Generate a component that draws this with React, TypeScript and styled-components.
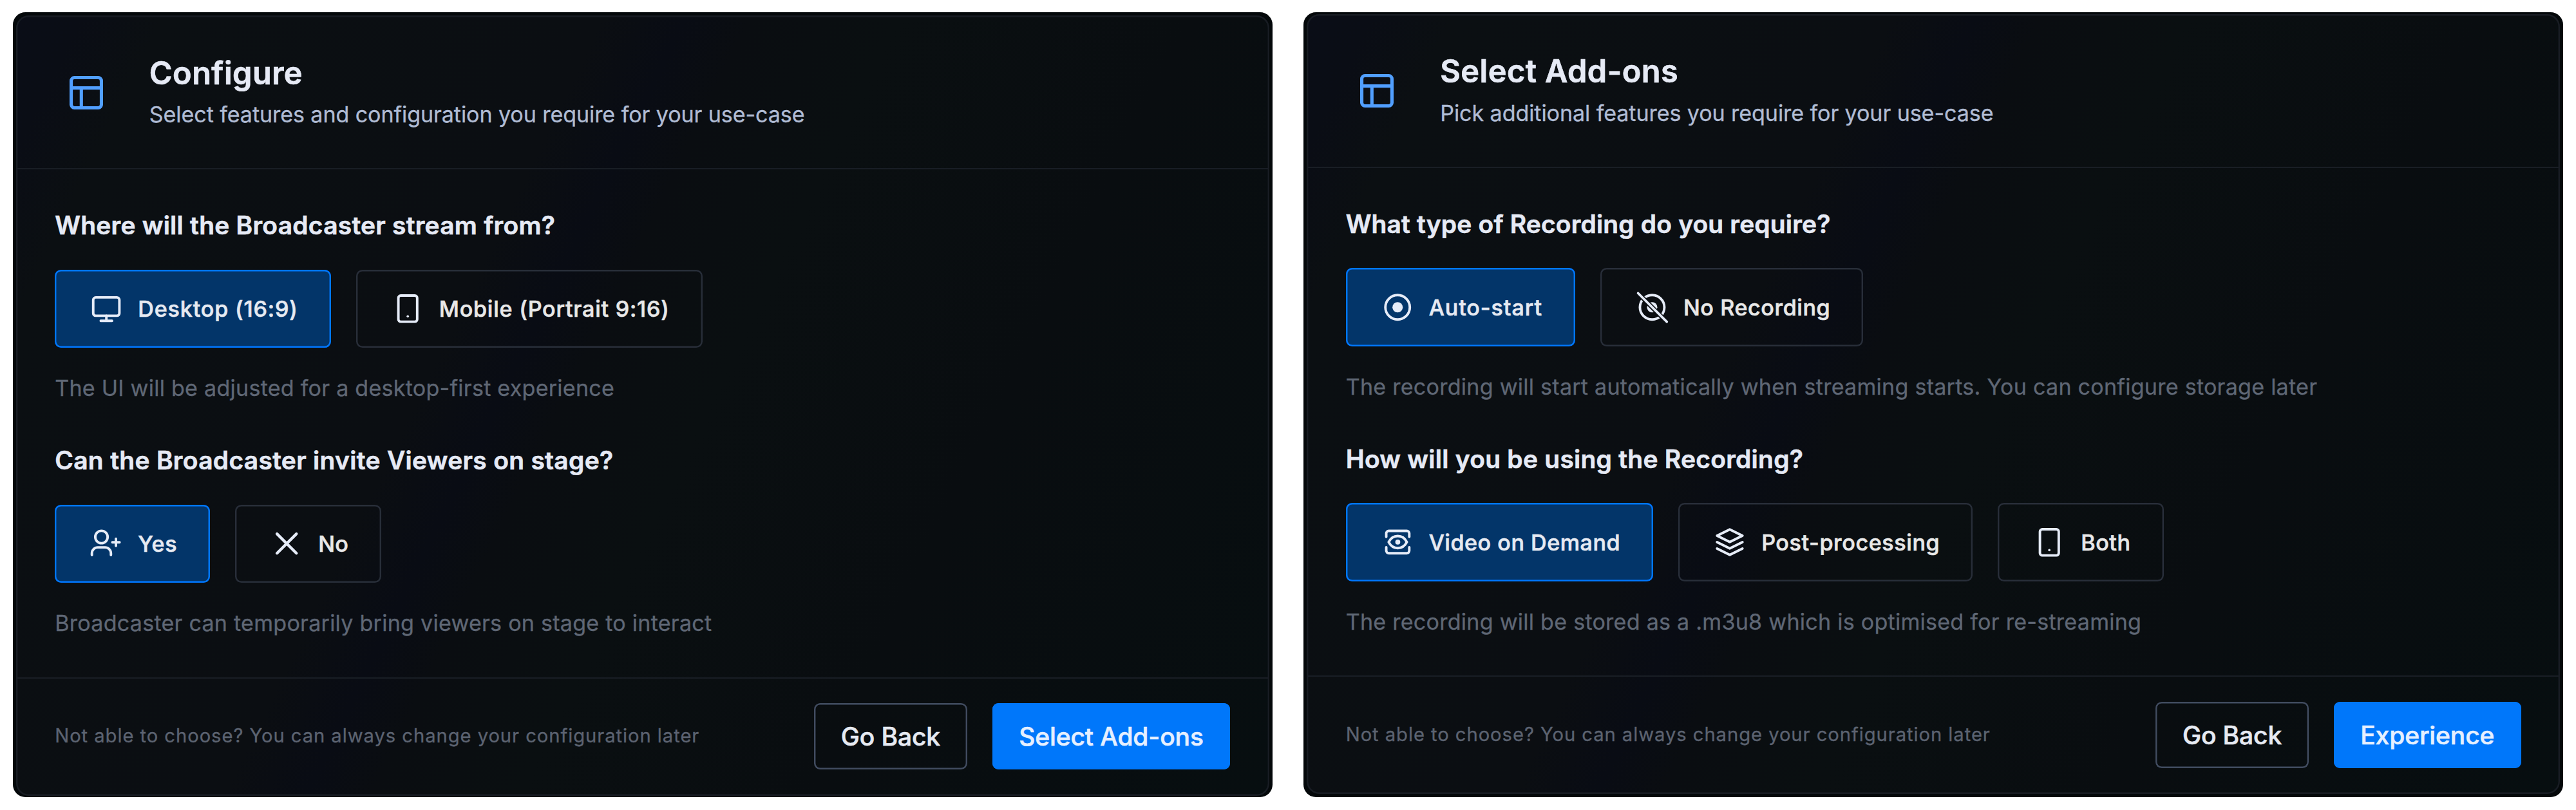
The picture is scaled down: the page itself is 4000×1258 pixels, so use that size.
import React from "react";
import styled, { createGlobalStyle, css } from "styled-components";

const SCALE = 2.434;
const u = (n: number) => `${(n * SCALE).toFixed(2)}px`;

const GlobalStyle = createGlobalStyle`
  html, body { margin: 0; padding: 0; background: #ffffff; }
  * { box-sizing: border-box; }
  h2, h3, p { margin: 0; }
`;

const Page = styled.main`
  display: flex;
  align-items: flex-start;
  gap: 48.3px;
  width: 4000px;
  height: 1258px;
  padding: 19.3px 20px;
  font-family: Inter, "Liberation Sans", sans-serif;
  -webkit-text-stroke: 0.3px currentColor;
  background: #ffffff;
`;

const Shell = styled.section<{ $top: number; $left: number }>`
  width: 1955.8px;
  height: 1219px;
  padding: ${(p) => `${p.$top}px 0 0 ${p.$left}px`};
  border-radius: ${u(8)};
  background: #04080a;
`;

const Panel = styled.div`
  display: flex;
  flex-direction: column;
  width: 1946px;
  height: 1211.2px;
  padding: 2px;
  border-radius: ${u(8)};
  box-shadow: inset 0 0 0 2.43px #181c23;
  background: linear-gradient(
    116deg,
    #0a0d17 0%,
    #0a0d15 4%,
    #0b0f12 9%,
    #0b0e12 36%,
    #090c14 41%,
    #0a0d11 45%,
    #0a0f11 54%,
    #090d10 72%,
    #070e10 100%
  );
`;

const Header = styled.header`
  display: flex;
  align-items: center;
  gap: 72px;
  height: 236.5px;
  padding-left: 81px;
  border-bottom: 2.43px solid #191e25;
`;

const HeaderText = styled.div`
  display: flex;
  flex-direction: column;
  gap: ${u(4.4)};
`;

const Title = styled.h2`
  font-size: ${u(20)};
  font-weight: 600;
  line-height: ${u(24)};
  letter-spacing: 0.42px;
  -webkit-text-stroke-width: 0.7px;
  color: #e6eaf5;
`;

const Subtitle = styled.p`
  font-size: ${u(14)};
  line-height: ${u(20)};
  letter-spacing: -0.09px;
  color: #b0bcd4;
`;

const Body = styled.div`
  display: flex;
  flex: 1;
  flex-direction: column;
  gap: ${u(24)};
  padding: ${u(24)};
`;

const Question = styled.div`
  display: flex;
  flex-direction: column;
  gap: ${u(16)};
`;

const Prompt = styled.h3<{ $tracking: number }>`
  font-size: ${u(16)};
  font-weight: 600;
  line-height: ${u(24)};
  letter-spacing: ${(p) => p.$tracking}px;
  -webkit-text-stroke-width: 0.6px;
  color: #e6eaf5;
`;

const Options = styled.div`
  display: flex;
  gap: ${u(16)};
`;

const Option = styled.button<{ $selected?: boolean; $tracking: number }>`
  display: flex;
  align-items: center;
  gap: ${u(8)};
  height: ${u(50)};
  padding: 0 ${u(21)};
  border: none;
  border-radius: ${u(4)};
  box-shadow: inset 0 0 0 2.43px #282e39;
  background: transparent;
  color: #e8e8e8;
  font-family: inherit;
  font-size: ${u(14)};
  font-weight: 500;
  letter-spacing: ${(p) => p.$tracking}px;
  -webkit-text-stroke: 0.6px currentColor;
  white-space: nowrap;
  ${(p) =>
    p.$selected &&
    css`
      box-shadow: inset 0 0 0 2.43px #0077ff;
      background: #033569;
      color: #e6eaf2;
    `}
`;

const Glyph = styled.svg`
  flex: none;
  width: ${u(24)};
  height: ${u(24)};
  fill: none;
  stroke: #e6ecf8;
  stroke-width: 1.6;
  stroke-linecap: round;
  stroke-linejoin: round;
`;

const Hint = styled.p`
  font-size: ${u(14)};
  line-height: ${u(20)};
  letter-spacing: 0.24px;
  color: #5f6775;
`;

const Footer = styled.footer`
  display: flex;
  align-items: center;
  gap: ${u(16)};
  height: 182.2px;
  padding: 0 ${u(24)};
  border-top: 2.43px solid #191e25;
`;

const Note = styled.p`
  flex: 1;
  font-size: ${u(12)};
  line-height: ${u(16)};
  letter-spacing: 0.94px;
  color: #5c6371;
`;

const Action = styled.button<{ $primary?: boolean }>`
  height: 103px;
  padding: 0 41.6px;
  border: none;
  border-radius: ${u(4)};
  box-shadow: inset 0 0 0 2.43px ${(p) => (p.$primary ? "#0077fa" : "#414c60")};
  background: ${(p) => (p.$primary ? "#0077fa" : "transparent")};
  color: ${(p) => (p.$primary ? "#e6f0ff" : "#e6eaf2")};
  font-family: inherit;
  font-size: ${u(16)};
  font-weight: 500;
  letter-spacing: -0.1px;
  -webkit-text-stroke: 0.6px currentColor;
  white-space: nowrap;
`;

const LayoutMark = styled.svg`
  flex: none;
  width: 52px;
  height: 52px;
  fill: none;
  stroke: #519fff;
  stroke-width: 5.1;
`;

const LayoutIcon = () => (
  <LayoutMark viewBox="0 0 52 52">
    <rect x="2.55" y="2.55" width="46.9" height="46.9" rx="5" />
    <path d="M2.5 18.6H49.5M18.3 18.6V49.5" />
  </LayoutMark>
);

const MonitorIcon = () => (
  <Glyph viewBox="0 0 24 24">
    <rect x="3.6" y="4.9" width="16.7" height="11.7" rx="1.6" />
    <path d="M12 16.6V19.8M8.4 19.8H15.6" />
  </Glyph>
);

const PhoneIcon = () => (
  <Glyph viewBox="0 0 24 24">
    <rect x="6" y="3.7" width="12" height="16.7" rx="1.5" />
    <circle cx="12" cy="17" r="0.75" fill="#e6ecf8" stroke="none" />
  </Glyph>
);

const UserPlusIcon = () => (
  <Glyph viewBox="0 0 24 24">
    <circle cx="8.85" cy="7.8" r="3.95" />
    <path d="M2.75 19.3V18.2A3.75 3.75 0 0 1 6.5 14.45H11.15A3.75 3.75 0 0 1 14.9 18.2V19.3" />
    <path d="M18.1 8.9V13.5M15.8 11.2H20.4" />
  </Glyph>
);

const CrossIcon = () => (
  <Glyph viewBox="0 0 24 24">
    <path d="M5.8 5.8L18.2 18.2M18.2 5.8L5.8 18.2" strokeWidth="1.8" />
  </Glyph>
);

const RecordIcon = () => (
  <Glyph viewBox="0 0 24 24">
    <circle cx="12" cy="12" r="7.8" />
    <circle cx="12" cy="12" r="3.3" fill="#e6ecf8" stroke="none" />
  </Glyph>
);

const RecordOffIcon = () => (
  <Glyph viewBox="0 0 24 24">
    <mask id="slash-gap" maskUnits="userSpaceOnUse" x="0" y="0" width="24" height="24">
      <rect width="24" height="24" fill="#fff" stroke="none" />
      <path d="M3.1 3.1L21.3 21.3" stroke="#000" strokeWidth="2.9" />
    </mask>
    <g mask="url(#slash-gap)">
      <circle cx="12.1" cy="12" r="7.8" />
      <circle cx="12.1" cy="12" r="3.3" fill="#e6ecf8" stroke="none" />
    </g>
    <path d="M3.1 3L21.5 21.3" strokeWidth="1.5" />
  </Glyph>
);

const OnDemandIcon = () => (
  <Glyph viewBox="0 0 24 24">
    <path d="M4.75 8.5V6.3A1.6 1.6 0 0 1 6.35 4.7H17.85A1.6 1.6 0 0 1 19.45 6.3V8.5" />
    <path d="M4.75 15.2V17.4A1.6 1.6 0 0 0 6.35 19H17.85A1.6 1.6 0 0 0 19.45 17.4V15.2" />
    <path d="M6.3 11.85C7.6 9.3 9.6 8 12.1 8S16.6 9.3 17.9 11.85C16.6 14.4 14.6 15.7 12.1 15.7S7.6 14.4 6.3 11.85Z" />
    <circle cx="12.1" cy="11.85" r="1.6" fill="#e6ecf8" stroke="none" />
  </Glyph>
);

const LayersIcon = () => (
  <Glyph viewBox="0 0 24 24">
    <path d="M11.9 3.8L20 7.8L11.9 11.8L3.8 7.8Z" />
    <path d="M3.8 11.9L11.9 15.9L20 11.9M3.8 16L11.9 20L20 16" />
  </Glyph>
);

type Choice = { label: string; Icon: React.FC; tracking: number };
type Ask = { prompt: string; tracking: number; hint: string; choices: Choice[] };
type Step = {
  title: string;
  subtitle: string;
  next: string;
  top: number;
  left: number;
  asks: Ask[];
};

const steps: Step[] = [
  {
    title: "Configure",
    subtitle: "Select features and configuration you require for your use-case",
    next: "Select Add-ons",
    top: 5.2,
    left: 4.8,
    asks: [
      {
        prompt: "Where will the Broadcaster stream from?",
        tracking: 0.26,
        hint: "The UI will be adjusted for a desktop-first experience",
        choices: [
          { label: "Desktop (16:9)", Icon: MonitorIcon, tracking: 0.86 },
          { label: "Mobile (Portrait 9:16)", Icon: PhoneIcon, tracking: 0.76 },
        ],
      },
      {
        prompt: "Can the Broadcaster invite Viewers on stage?",
        tracking: 0.32,
        hint: "Broadcaster can temporarily bring viewers on stage to interact",
        choices: [
          { label: "Yes", Icon: UserPlusIcon, tracking: 0.6 },
          { label: "No", Icon: CrossIcon, tracking: 0.4 },
        ],
      },
    ],
  },
  {
    title: "Select Add-ons",
    subtitle: "Pick additional features you require for your use-case",
    next: "Experience",
    top: 2.8,
    left: 5.2,
    asks: [
      {
        prompt: "What type of Recording do you require?",
        tracking: 0.18,
        hint: "The recording will start automatically when streaming starts. You can configure storage later",
        choices: [
          { label: "Auto-start", Icon: RecordIcon, tracking: 0.92 },
          { label: "No Recording", Icon: RecordOffIcon, tracking: 0.6 },
        ],
      },
      {
        prompt: "How will you be using the Recording?",
        tracking: 0.27,
        hint: "The recording will be stored as a .m3u8 which is optimised for re-streaming",
        choices: [
          { label: "Video on Demand", Icon: OnDemandIcon, tracking: 0.53 },
          { label: "Post-processing", Icon: LayersIcon, tracking: 0.6 },
          { label: "Both", Icon: PhoneIcon, tracking: 0.55 },
        ],
      },
    ],
  },
];

const StepPanel = ({ step }: { step: Step }) => (
  <Shell $top={step.top} $left={step.left}>
    <Panel>
      <Header>
        <LayoutIcon />
        <HeaderText>
          <Title>{step.title}</Title>
          <Subtitle>{step.subtitle}</Subtitle>
        </HeaderText>
      </Header>
      <Body>
        {step.asks.map((ask) => (
          <Question key={ask.prompt}>
            <Prompt $tracking={ask.tracking}>{ask.prompt}</Prompt>
            <Options>
              {ask.choices.map(({ label, Icon, tracking }, i) => (
                <Option key={label} $selected={i === 0} $tracking={tracking}>
                  <Icon />
                  {label}
                </Option>
              ))}
            </Options>
            <Hint>{ask.hint}</Hint>
          </Question>
        ))}
      </Body>
      <Footer>
        <Note>Not able to choose? You can always change your configuration later</Note>
        <Action>Go Back</Action>
        <Action $primary>{step.next}</Action>
      </Footer>
    </Panel>
  </Shell>
);

export default function App() {
  return (
    <>
      <GlobalStyle />
      <Page>
        {steps.map((step) => (
          <StepPanel key={step.title} step={step} />
        ))}
      </Page>
    </>
  );
}
